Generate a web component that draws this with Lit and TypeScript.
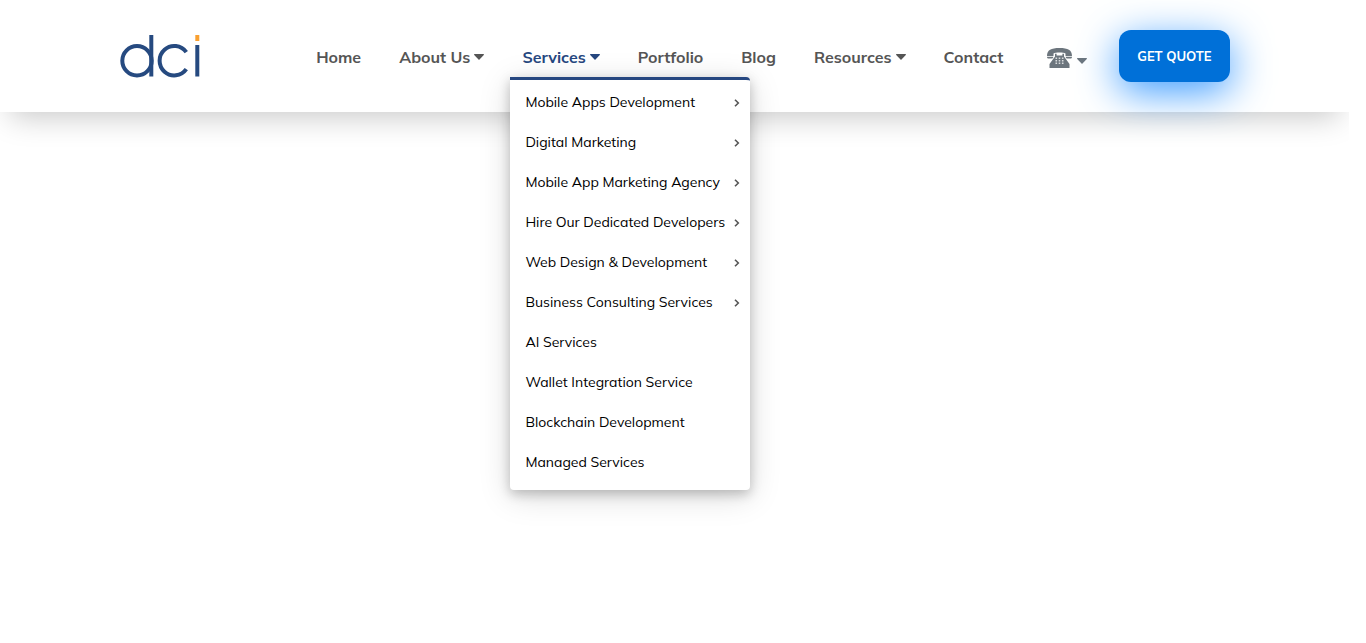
import { LitElement, html, css, nothing } from "lit";
import { customElement, state } from "lit/decorators.js";

interface NavItem {
  label: string;
  children?: { label: string; nested?: boolean }[];
  caret?: boolean;
}

const NAV: NavItem[] = [
  { label: "Home" },
  { label: "About Us", caret: true },
  {
    label: "Services",
    caret: true,
    children: [
      { label: "Mobile Apps Development", nested: true },
      { label: "Digital Marketing", nested: true },
      { label: "Mobile App Marketing Agency", nested: true },
      { label: "Hire Our Dedicated Developers", nested: true },
      { label: "Web Design & Development", nested: true },
      { label: "Business Consulting Services", nested: true },
      { label: "AI Services" },
      { label: "Wallet Integration Service" },
      { label: "Blockchain Development" },
      { label: "Managed Services" },
    ],
  },
  { label: "Portfolio" },
  { label: "Blog" },
  { label: "Resources", caret: true },
  { label: "Contact" },
];

const caret = html`<svg class="caret" viewBox="0 0 10 6" aria-hidden="true">
  <path d="M.6 0h8.800c.5 0 .8.6.4 1L5.500 5.600a.7.7 0 0 1-1 0L.2 1C-.2.6.1 0 .6 0z" />
</svg>`;

@customElement("app-root")
export class AppRoot extends LitElement {
  @state() private open = "Services";

  static styles = css`
    :host {
      display: block;
      min-height: 100vh;
      background: #fff;
      font-family: Mulish, Muli, "Open Sans", "Noto Sans", sans-serif;
    }
    a {
      color: inherit;
      text-decoration: none;
    }
    ul {
      list-style: none;
      margin: 0;
      padding: 0;
    }
    .page {
      min-height: 100vh;
      margin-right: 17px;
      overflow: hidden;
    }
    .header {
      background: #fff;
      box-shadow: 0 15px 30px -10px rgba(0, 0, 0, 0.22);
    }
    .bar {
      display: flex;
      align-items: center;
      box-sizing: border-box;
      max-width: 1140px;
      min-height: 112px;
      margin: 0 auto;
      padding: 0 15px;
    }
    .logo {
      display: block;
      width: 80px;
      height: 44px;
    }
    .logo svg {
      display: block;
      width: 100%;
      height: 100%;
    }
    .nav {
      display: flex;
      margin-left: auto;
    }
    .item {
      position: relative;
      padding: 0 19px;
    }
    .link {
      display: flex;
      align-items: center;
      gap: 4px;
      padding-top: 2px;
      font-size: 16px;
      line-height: 40px;
      font-weight: 700;
      color: #555;
      white-space: nowrap;
    }
    .active {
      color: #264780;
    }
    .caret {
      width: 10px;
      height: 6px;
      fill: currentColor;
    }
    .menu {
      position: absolute;
      top: 100%;
      left: 7px;
      z-index: 2;
      box-sizing: border-box;
      width: 240px;
      padding: 2px 0 8px;
      background: #fff;
      border-top: 3px solid #264780;
      border-radius: 0 4px 4px 4px;
      box-shadow: 0 4px 12px rgba(0, 0, 0, 0.22), 0 6px 32px rgba(0, 0, 0, 0.15);
    }
    .entry {
      display: flex;
      align-items: center;
      justify-content: space-between;
      padding: 0 10px 0 15px;
      font-size: 14px;
      line-height: 40px;
      color: #000;
      white-space: nowrap;
    }
    .chevron {
      width: 6px;
      height: 9px;
      fill: none;
      stroke: #555;
      stroke-width: 1.6;
    }
    .phone {
      display: flex;
      align-items: flex-end;
      gap: 5px;
      margin: 4px 32px 0 25px;
      padding: 0;
      border: 0;
      background: none;
      color: #6c757d;
    }
    .phone .handset {
      width: 25px;
      height: 20px;
      fill: currentColor;
    }
    .phone .caret {
      margin-bottom: 4px;
    }
    .quote {
      padding: 0 18px;
      border-radius: 12px;
      background: #0070d8;
      box-shadow: 0 10px 40px #3c9bff;
      color: #fff;
      font-size: 13px;
      font-weight: 700;
      line-height: 52px;
      white-space: nowrap;
    }
  `;

  private toggle(event: Event, item: NavItem) {
    event.preventDefault();
    if (item.children) this.open = this.open === item.label ? "" : item.label;
  }

  render() {
    return html`
      <div class="page">
        <header class="header">
          <div class="bar">
            <a class="logo" href="#" aria-label="dci">
              <svg viewBox="0 0 80 44" fill="none" stroke="#264a80" stroke-width="4">
                <circle cx="17" cy="26.700" r="14.700" />
                <path d="M31.300 1v41.500M66.300 18.200A14.700 14.700 0 1 0 66.300 35.200M77.300 11v31.500" />
                <path d="M77.300 1v6" stroke="#f9a030" />
              </svg>
            </a>
            <ul class="nav">
              ${NAV.map((item) => {
                const open = item.label === this.open;
                return html`<li class="item">
                  <a class="link ${open ? "active" : ""}" href="#" @click=${(e: Event) => this.toggle(e, item)}
                    >${item.label}${item.caret ? caret : nothing}</a
                  >
                  ${open && item.children
                    ? html`<ul class="menu">
                        ${item.children.map(
                          (child) => html`<li>
                            <a class="entry" href="#"
                              >${child.label}${child.nested
                                ? html`<svg class="chevron" viewBox="0 0 6 9" aria-hidden="true">
                                    <path d="M1 1.700 4.300 5 1 8.300" />
                                  </svg>`
                                : nothing}</a
                            >
                          </li>`
                        )}
                      </ul>`
                    : nothing}
                </li>`;
              })}
            </ul>
            <button class="phone" type="button" aria-label="Phone numbers">
              <svg class="handset" viewBox="0 0 25 20" aria-hidden="true">
                <path d="M0 8C0 2 4 0 12.500 0S25 2 25 8H18.500V5.500C16.500 4.300 8.500 4.300 6.500 5.500V8H0z" />
                <path d="M0 8.700h6.300c0 1.200-.6 1.800-1.800 1.800H1.500C.5 10.500 0 9.900 0 8.700zM18.700 8.700H25c0 1.200-.5 1.800-1.500 1.800h-3c-1.200 0-1.800-.6-1.800-1.800z" />
                <path d="M8 5.800h1.600v1.700h5.800V5.800H17v2.700l5.500 7.500v4h-20v-4L8 8.500z" />
                <path
                  fill="#fff"
                  fill-opacity=".75"
                  d="M8.500 9.500h1.600V11H8.500zM11.700 9.500h1.600V11h-1.600zM14.900 9.500h1.600V11h-1.600zM8.500 12h1.600v1.500H8.500zM11.700 12h1.600v1.500h-1.600zM14.900 12h1.600v1.500h-1.600zM8.500 14.500h1.600V16H8.500zM11.700 14.500h1.600V16h-1.600zM14.900 14.500h1.600V16h-1.600z"
                />
              </svg>
              ${caret}
            </button>
            <a class="quote" href="#">GET QUOTE</a>
          </div>
        </header>
      </div>
    `;
  }
}
